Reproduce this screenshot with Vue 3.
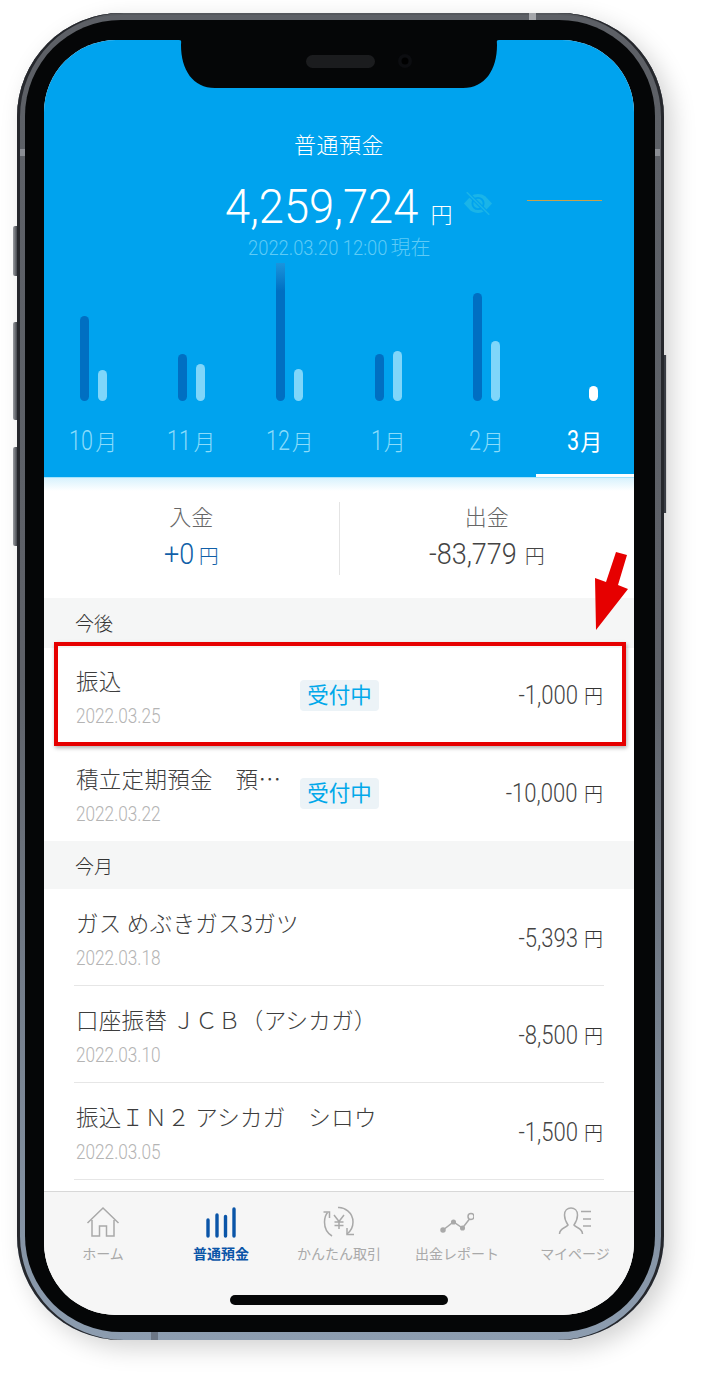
<template>
  <div class="page">
    <div class="phone">
      <i class="side side-left s1"></i>
      <i class="side side-left s2"></i>
      <i class="side side-left s3"></i>
      <i class="side side-right"></i>
      <i class="band band-top"></i>
      <i class="band band-left"></i>
      <i class="band band-right"></i>
      <i class="band band-bottom"></i>

      <div class="bezel">
        <div class="screen">
          <svg class="notch" width="320" height="49" viewBox="0 0 320 49">
            <path d="M0 0H320C317 0 318 2 318 5C318 30 306 48 284 48H36C14 48 2 30 2 5C2 2 3 0 0 0Z" fill="#050607" />
            <rect x="127" y="15" width="69" height="13" rx="6.5" fill="#1b1c1e" />
            <circle cx="226" cy="21" r="7" fill="#0c0d10" />
            <circle cx="226" cy="21" r="3.500" fill="#000" />
          </svg>

          <header class="head">
            <div class="title">普通預金</div>
            <div class="balance">
              <span class="num">4,259,724</span>
              <span class="yen">円</span>
              <svg class="eye" width="30" height="23" viewBox="0 0 32 24">
                <path d="M1 12L8 4.500C12.500 1 19.500 1 24 4.500L31 12L24 19.500C19.500 23 12.500 23 8 19.500Z" fill="#1ab4e8" />
                <circle cx="16" cy="12" r="6" fill="none" stroke="#00a3ee" stroke-width="2" />
                <path d="M5 1L27 23" stroke="#00a3ee" stroke-width="4" />
                <path d="M4 0L28 24" stroke="#1ab4e8" stroke-width="1.600" />
              </svg>
            </div>
            <div class="asof"><span class="stamp">2022.03.20 12:00</span>現在</div>
            <i class="goal"></i>

            <div class="chart">
              <div v-for="m in months" :key="m.no" class="col">
                <div class="bars">
                  <span v-if="m.out" class="bar dark" :class="{ fade: m.out > 130 }" :style="{ height: m.out + 'px' }"></span>
                  <span v-else class="bar blank"></span>
                  <span class="bar" :class="m.active ? 'white' : 'light'" :style="{ height: m.inn + 'px' }"></span>
                </div>
                <div class="month" :class="{ active: m.active }">
                  <span class="digit" :style="{ width: m.no.length * 13 + 'px' }">{{ m.no }}</span>月
                </div>
              </div>
            </div>
          </header>

          <section class="summary">
            <div class="sum-col">
              <div class="sum-label">入金</div>
              <div class="sum-val blue"><span class="sum-num" style="width: 28px">+0</span><small>円</small></div>
            </div>
            <div class="sum-col">
              <div class="sum-label">出金</div>
              <div class="sum-val"><span class="sum-num" style="width: 89px">-83,779</span><small>円</small></div>
            </div>
          </section>

          <div class="list">
            <template v-for="g in groups" :key="g.name">
              <div class="group">{{ g.name }}</div>
              <div v-for="r in g.rows" :key="r.date" class="row" :class="{ line: r.line }">
                <div class="info">
                  <div class="name">{{ r.name }}</div>
                  <div class="date">{{ r.date }}</div>
                </div>
                <span v-if="r.badge" class="badge">受付中</span>
                <div class="amount"><span class="value">{{ r.amount }}</span> <small>円</small></div>
              </div>
            </template>
          </div>

          <nav class="tabs">
            <div v-for="t in tabs" :key="t.label" class="tab" :class="{ on: t.on }">
              <svg v-if="t.icon === 'home'" width="34" height="32" viewBox="0 0 34 32" fill="none" stroke="#a9a9a9" stroke-width="1.500">
                <path d="M1.500 17L17 2L32.500 17M6 14V30H13.500V20H20.500V30H28V14" />
              </svg>
              <svg v-else-if="t.icon === 'bars'" width="34" height="32" viewBox="0 0 34 32" fill="none" stroke="#0a55a8" stroke-width="3.400" stroke-linecap="round">
                <path d="M4 14V30M13 9V30M21.500 10.500V30M30 3V30" />
              </svg>
              <svg v-else-if="t.icon === 'yen'" width="34" height="32" viewBox="0 0 34 32" fill="none" stroke="#a9a9a9" stroke-width="1.500">
                <path d="M16 1.500C22 1 31 6 31 16C31 21 29 25 25 28M10 30C5 27 2.500 22 2.500 16C2.500 12 3.500 9 5.500 6.500" />
                <path d="M1.500 6H7.500V12M25 22V28.500H32" />
                <path d="M12 9L17 15.500L22 9M17 15.500V23M12.500 16H21.500M12.500 19.500H21.500" />
              </svg>
              <svg v-else-if="t.icon === 'chart'" width="34" height="32" viewBox="0 0 34 32" fill="none" stroke="#a9a9a9" stroke-width="1.500">
                <path d="M3 24L13.500 16L22.500 22L29.500 13" />
                <circle cx="3" cy="24" r="2" fill="#a9a9a9" />
                <circle cx="13.500" cy="16" r="1.800" fill="#a9a9a9" />
                <circle cx="22.500" cy="22" r="1.800" fill="#a9a9a9" />
                <circle cx="31" cy="10.500" r="3" fill="#f6f6f6" />
              </svg>
              <svg v-else width="34" height="32" viewBox="0 0 34 32" fill="none" stroke="#a9a9a9" stroke-width="1.500">
                <path d="M1.500 28C1.500 22 8 22 10 19C8 16 6.500 13 6.500 9C6.500 4.500 9.500 2 13 2C16.500 2 19.500 4.500 19.500 9C19.500 13 18 16 16 19C18 22 24.500 22 24.500 28" />
                <path d="M23 5.500H33M25 13H33M25 20H33" />
              </svg>
              <span>{{ t.label }}</span>
            </div>
          </nav>

          <div class="home-bar"><i></i></div>
        </div>
      </div>
    </div>

    <div class="callout"></div>
    <svg class="arrow" width="38" height="82" viewBox="0 0 38 82">
      <path d="M24 0L35 3L26 33L36 37L4 78L3 26L14 30Z" fill="#e60000" />
    </svg>
  </div>
</template>

<script setup>
const months = [
  { no: '10', out: 85, inn: 31 },
  { no: '11', out: 47, inn: 37 },
  { no: '12', out: 138, inn: 32 },
  { no: '1', out: 47, inn: 50 },
  { no: '2', out: 108, inn: 60 },
  { no: '3', out: 0, inn: 15, active: true },
]

const groups = [
  {
    name: '今後',
    rows: [
      { name: '振込', date: '2022.03.25', amount: '-1,000', badge: true },
      { name: '積立定期預金　預…', date: '2022.03.22', amount: '-10,000', badge: true },
    ],
  },
  {
    name: '今月',
    rows: [
      { name: 'ガス めぶきガス3ガツ', date: '2022.03.18', amount: '-5,393', line: true },
      { name: '口座振替 ＪＣＢ（アシカガ）', date: '2022.03.10', amount: '-8,500', line: true },
      { name: '振込ＩＮ２ アシカガ　シロウ', date: '2022.03.05', amount: '-1,500', line: true },
    ],
  },
]

const tabs = [
  { label: 'ホーム', icon: 'home' },
  { label: '普通預金', icon: 'bars', on: true },
  { label: 'かんたん取引', icon: 'yen' },
  { label: '出金レポート', icon: 'chart' },
  { label: 'マイページ', icon: 'user' },
]
</script>

<style>
html,
body {
  background: #fff;
}
</style>

<style scoped>
.page {
  position: relative;
  width: 705px;
  height: 1378px;
  padding: 13px 0 0 17px;
  box-sizing: border-box;
  overflow: hidden;
  font-family: Roboto, "Noto Sans CJK JP", sans-serif;
  font-weight: 300;
  color: #444;
}

.phone {
  position: relative;
  width: 647px;
  height: 1327px;
  box-sizing: border-box;
  padding: 7px 9px 8px 8px;
  border-radius: 104px;
  background: linear-gradient(#5d6066, #5e6168 50%, #8d9db0);
  box-shadow:
    inset 3px 0 #25272c,
    inset -3px 0 #25272c,
    inset 0 2px #55585d,
    8px 8px 24px rgba(0, 0, 0, 0.18);
}

.side {
  position: absolute;
  width: 4px;
  background: linear-gradient(90deg, #9a9da2, #45484e);
}

.side-left {
  left: -4px;
  border-radius: 2px 0 0 2px;
}

.s1 {
  top: 213px;
  height: 50px;
}

.s2 {
  top: 309px;
  height: 98px;
}

.s3 {
  top: 434px;
  height: 99px;
}

.side-right {
  right: -3px;
  top: 342px;
  height: 158px;
  width: 2px;
  border-right: 1px solid #cfcfcf;
  background: #3a3d44;
}

.band {
  position: absolute;
  background: #8b8e94;
}

.band-top {
  left: 512px;
  top: 0;
  width: 7px;
  height: 7px;
  background: #a5a7ab;
}

.band-left {
  left: 3px;
  top: 136px;
  width: 5px;
  height: 7px;
}

.band-right {
  right: 4px;
  top: 136px;
  width: 5px;
  height: 7px;
}

.band-bottom {
  left: 134px;
  bottom: 0;
  width: 7px;
  height: 8px;
  background: #6c7685;
}

.bezel {
  height: 100%;
  box-sizing: border-box;
  padding: 20px 21px 17px 19px;
  border-radius: 96px;
  background: #050607;
}

.screen {
  position: relative;
  display: flex;
  flex-direction: column;
  height: 100%;
  border-radius: 72px;
  overflow: hidden;
  background: #fff;
}

.notch {
  position: absolute;
  left: 135px;
  top: 0;
  z-index: 2;
}

.head {
  position: relative;
  display: flex;
  flex-direction: column;
  align-items: center;
  height: 437px;
  flex: none;
  background: #00a3ee;
  color: #fff;
}

.title {
  margin-top: 91px;
  font-size: 22px;
  line-height: 30px;
  letter-spacing: 0.5px;
}

.balance {
  position: relative;
  margin-top: 16px;
  height: 60px;
  line-height: 60px;
  white-space: nowrap;
}

.num {
  display: inline-block;
  width: 192px;
  font-size: 49px;
  transform: scaleX(0.925);
  transform-origin: left;
}

.yen {
  margin-left: 13px;
  font-size: 22px;
}

.eye {
  position: absolute;
  left: 100%;
  top: 15px;
  margin-left: 10px;
}

.asof {
  margin-top: -2px;
  font-size: 20px;
  line-height: 26px;
  color: #5ecbf6;
  white-space: nowrap;
}

.stamp {
  display: inline-block;
  width: 143px;
  font-size: 21px;
  transform: scaleX(0.875);
  transform-origin: left;
}

.goal {
  position: absolute;
  left: 483px;
  top: 160px;
  width: 75px;
  height: 1px;
  background: #c8a24c;
}

.chart {
  position: absolute;
  left: 0;
  right: 0;
  bottom: 0;
  display: flex;
}

.col {
  flex: 1;
  display: flex;
  flex-direction: column;
  align-items: center;
}

.bars {
  display: flex;
  align-items: flex-end;
  gap: 9px;
  height: 138px;
}

.bar {
  width: 9px;
  border-radius: 4.500px;
}

.blank {
  height: 0;
}

.dark {
  background: #006fc2;
}

.fade {
  border-radius: 0 0 4.500px 4.500px;
  background: linear-gradient(#1b94dc, #006fc2 28px);
}

.light {
  background: #7fd6fa;
}

.white {
  background: #fff;
}

.month {
  width: 100%;
  height: 76px;
  box-sizing: border-box;
  padding-top: 24px;
  text-align: center;
  font-size: 22px;
  line-height: 32px;
  white-space: nowrap;
  color: #8adcfb;
}

.digit {
  display: inline-block;
  font-size: 27px;
  text-align: left;
  transform: scaleX(0.8);
  transform-origin: left;
}

.month.active {
  color: #fff;
  font-weight: 400;
  border-bottom: 3px solid #fff;
}

.summary {
  flex: none;
  display: flex;
  height: 121px;
  box-sizing: border-box;
  padding-top: 24px;
  border-top: 1px solid #a5e3fb;
  background: linear-gradient(#d8f2fd, #fff 13px);
}

.sum-col {
  flex: 1;
  height: 73px;
  text-align: center;
}

.sum-col + .sum-col {
  border-left: 1px solid #e4e4e4;
}

.sum-label {
  font-size: 22px;
  line-height: 32px;
  color: #666;
}

.sum-val {
  margin-top: 1px;
  font-size: 30px;
  line-height: 38px;
  white-space: nowrap;
}

.sum-num {
  display: inline-block;
  text-align: left;
  transform: scaleX(0.9);
  transform-origin: left;
}

.sum-val small {
  margin-left: 7px;
  font-size: 20px;
}

.blue {
  color: #105fa8;
}

.list {
  flex: 1;
  min-height: 0;
  overflow: hidden;
}

.group {
  height: 50px;
  box-sizing: border-box;
  padding: 13px 0 0 31px;
  background: #f5f6f6;
  font-size: 19px;
  line-height: 28px;
  color: #333;
}

.group + .row + .row + .group {
  height: 48px;
}

.row {
  display: flex;
  align-items: center;
  height: 96px;
  margin: 0 30px;
  padding: 0 1px 0 2px;
  box-sizing: border-box;
}

.group + .row {
  height: 97px;
  padding-bottom: 3px;
}

.line,
.group + .row.line {
  height: 97px;
  padding-bottom: 0;
  border-bottom: 1px solid #e6e6e6;
}

.info {
  width: 206px;
  flex: none;
  padding-top: 2px;
}

.name {
  font-family: "Noto Sans CJK JP", Roboto, sans-serif;
  font-size: 22.500px;
  line-height: 32px;
  color: #3d3d3d;
  white-space: nowrap;
  letter-spacing: 0.3px;
}

.date {
  margin-top: 8px;
  font-size: 20px;
  line-height: 24px;
  color: #b4b4b4;
  white-space: nowrap;
  transform: scaleX(0.86);
  transform-origin: left;
}

.badge {
  margin-left: 18px;
  width: 79px;
  height: 31px;
  line-height: 31px;
  border-radius: 4px;
  background: #ecf3f7;
  text-align: center;
  font-size: 21.500px;
  font-weight: 400;
  color: #00a8ea;
}

.amount {
  margin-left: auto;
  padding-top: 1px;
  font-size: 26px;
  color: #444;
  white-space: nowrap;
}

.row:not(.line) .amount {
  margin-bottom: 2px;
}

.value {
  display: inline-block;
  transform: scaleX(0.85);
  transform-origin: right;
}

.amount small {
  position: relative;
  top: -1px;
  font-size: 19px;
  color: #333;
}

.tabs {
  flex: none;
  display: flex;
  height: 124px;
  box-sizing: border-box;
  border-top: 1px solid #d8d8d8;
  background: #f6f6f6;
}

.tab {
  flex: 1;
  display: flex;
  flex-direction: column;
  align-items: center;
  padding-top: 14px;
  font-size: 14px;
  line-height: 20px;
  font-weight: 400;
  color: #a9a9a9;
}

.tab span {
  margin-top: 6px;
  white-space: nowrap;
}

.tab.on {
  color: #0a55a8;
  font-weight: 700;
}

.home-bar {
  position: absolute;
  left: 0;
  right: 0;
  bottom: 10px;
  display: flex;
  justify-content: center;
}

.home-bar i {
  width: 218px;
  height: 10px;
  border-radius: 5px;
  background: #050607;
}

.callout {
  position: absolute;
  left: 54px;
  top: 642px;
  width: 572px;
  height: 104px;
  box-sizing: border-box;
  border: 4px solid #e60000;
  box-shadow: 1px 2px 4px rgba(0, 0, 0, 0.3);
}

.arrow {
  position: absolute;
  left: 592px;
  top: 552px;
}
</style>
